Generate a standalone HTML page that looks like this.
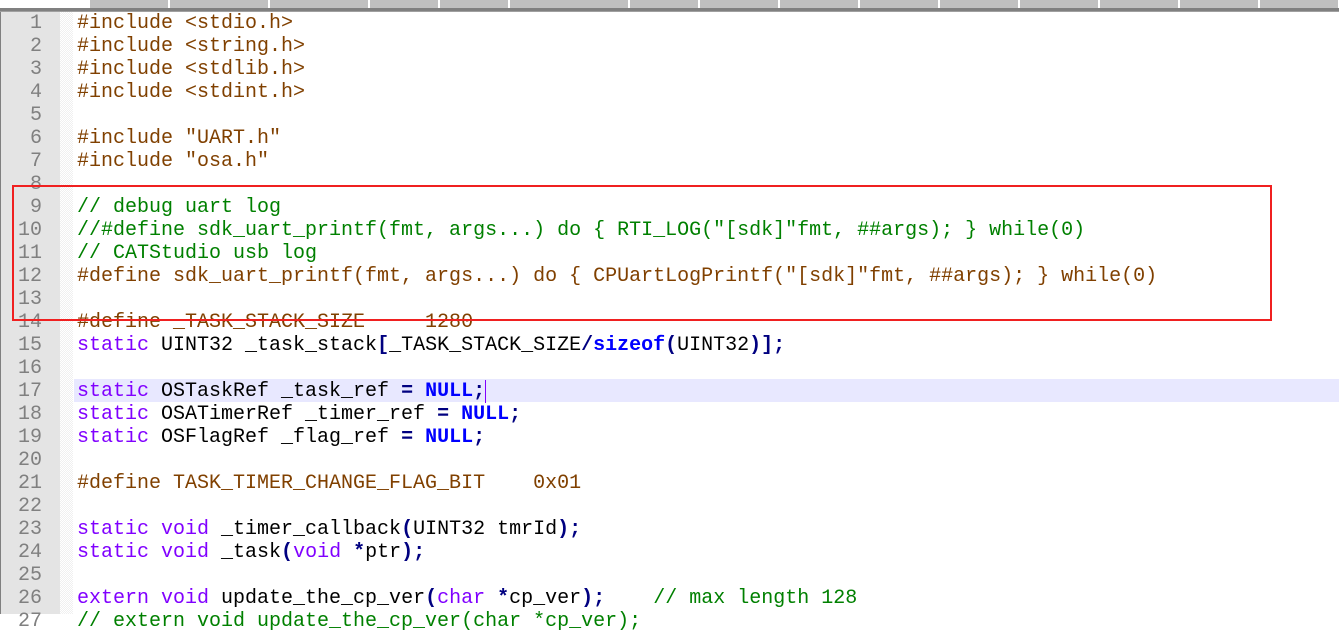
<!DOCTYPE html><html><head><style>
body{margin:0;width:1339px;height:614px;overflow:hidden;background:#fff;position:relative;font-family:"Liberation Mono",monospace}
#tabs{position:absolute;left:0;top:0;width:1339px;height:8px;background:#c0c0c0}
#tabs div{position:absolute;top:0;height:8px;border-right:2px solid #fff;box-sizing:border-box}
#sep{position:absolute;left:0;top:8px;width:1339px;height:3px;background:#808080;border-bottom:1px solid #a0a0a0}
#gut{position:absolute;left:0;top:12px;width:60px;height:602px;background:#e4e4e4;border-left:1px solid #808080}
#fold{position:absolute;left:60px;top:12px;width:13px;height:602px;background:repeating-conic-gradient(#f0f0f0 0 25%,#fff 0 50%) 0 0/2px 2px}
.l{position:absolute;left:0;height:23px;line-height:23px;font-size:20px;white-space:pre;width:1339px}
.n{position:absolute;left:0;width:42px;text-align:right;color:#808080}
.c{position:absolute;left:77px;color:#000}
.p{color:#804000}.k{color:#8000ff}.g{color:#008000}.o{color:#000080;font-weight:bold}.u{color:#ff8000}
#hl{position:absolute;left:74px;top:379px;width:1265px;height:23px;background:#e8e8ff}
#box{position:absolute;left:12px;top:185px;width:1256px;height:132px;border:2px solid #f02020}
</style></head><body>
<div id="tabs"><div style="left:0;width:90px;background:#fff"></div><div style="left:90px;width:80px"></div><div style="left:170px;width:100px"></div><div style="left:270px;width:100px"></div><div style="left:370px;width:70px"></div><div style="left:440px;width:70px"></div><div style="left:510px;width:120px"></div><div style="left:630px;width:70px"></div><div style="left:700px;width:80px"></div><div style="left:780px;width:80px"></div><div style="left:860px;width:80px"></div><div style="left:940px;width:80px"></div><div style="left:1020px;width:80px"></div><div style="left:1100px;width:80px"></div><div style="left:1180px;width:80px"></div><div style="left:1260px;width:80px"></div></div>
<div id="sep"></div><div id="gut"></div><div id="fold"></div><div id="hl"></div>
<div class="l" style="top:12px"><span class="n">1</span><span class="c p">#include &lt;stdio.h&gt;</span></div>
<div class="l" style="top:35px"><span class="n">2</span><span class="c p">#include &lt;string.h&gt;</span></div>
<div class="l" style="top:58px"><span class="n">3</span><span class="c p">#include &lt;stdlib.h&gt;</span></div>
<div class="l" style="top:81px"><span class="n">4</span><span class="c p">#include &lt;stdint.h&gt;</span></div>
<div class="l" style="top:104px"><span class="n">5</span></div>
<div class="l" style="top:127px"><span class="n">6</span><span class="c p">#include "UART.h"</span></div>
<div class="l" style="top:150px"><span class="n">7</span><span class="c p">#include "osa.h"</span></div>
<div class="l" style="top:173px"><span class="n">8</span></div>
<div class="l" style="top:196px"><span class="n">9</span><span class="c g">// debug uart log</span></div>
<div class="l" style="top:219px"><span class="n">10</span><span class="c g">//#define sdk_uart_printf(fmt, args...) do { RTI_LOG("[sdk]"fmt, ##args); } while(0)</span></div>
<div class="l" style="top:242px"><span class="n">11</span><span class="c g">// CATStudio usb log</span></div>
<div class="l" style="top:265px"><span class="n">12</span><span class="c p">#define sdk_uart_printf(fmt, args...) do { CPUartLogPrintf("[sdk]"fmt, ##args); } while(0)</span></div>
<div class="l" style="top:288px"><span class="n">13</span></div>
<div class="l" style="top:311px"><span class="n">14</span><span class="c p">#define _TASK_STACK_SIZE     1280</span></div>
<div class="l" style="top:334px"><span class="n">15</span><span class="c"><span class="k">static</span> UINT32 _task_stack<span class="o">[</span>_TASK_STACK_SIZE<span class="o">/</span><span class="o" style="color:#0000ff">sizeof</span><span class="o">(</span>UINT32<span class="o">)];</span></span></div>
<div class="l" style="top:357px"><span class="n">16</span></div>
<div class="l" style="top:380px"><span class="n">17</span><span class="c"><span class="k">static</span> OSTaskRef _task_ref <span class="o">=</span> <span class="o" style="color:#0000ff">NULL</span><span class="o">;</span><span style="border-left:1px solid #8000ff"></span></span></div>
<div class="l" style="top:403px"><span class="n">18</span><span class="c"><span class="k">static</span> OSATimerRef _timer_ref <span class="o">=</span> <span class="o" style="color:#0000ff">NULL</span><span class="o">;</span></span></div>
<div class="l" style="top:426px"><span class="n">19</span><span class="c"><span class="k">static</span> OSFlagRef _flag_ref <span class="o">=</span> <span class="o" style="color:#0000ff">NULL</span><span class="o">;</span></span></div>
<div class="l" style="top:449px"><span class="n">20</span></div>
<div class="l" style="top:472px"><span class="n">21</span><span class="c p">#define TASK_TIMER_CHANGE_FLAG_BIT    0x01</span></div>
<div class="l" style="top:495px"><span class="n">22</span></div>
<div class="l" style="top:518px"><span class="n">23</span><span class="c"><span class="k">static void</span> _timer_callback<span class="o">(</span>UINT32 tmrId<span class="o">);</span></span></div>
<div class="l" style="top:541px"><span class="n">24</span><span class="c"><span class="k">static void</span> _task<span class="o">(</span><span class="k">void</span> <span class="o">*</span>ptr<span class="o">);</span></span></div>
<div class="l" style="top:564px"><span class="n">25</span></div>
<div class="l" style="top:587px"><span class="n">26</span><span class="c"><span class="k">extern void</span> update_the_cp_ver<span class="o">(</span><span class="k">char</span> <span class="o">*</span>cp_ver<span class="o">);</span>    <span class="g">// max length 128</span></span></div>
<div class="l" style="top:610px"><span class="n">27</span><span class="c g">// extern void update_the_cp_ver(char *cp_ver);</span></div>
<div id="box"></div>
</body></html>
